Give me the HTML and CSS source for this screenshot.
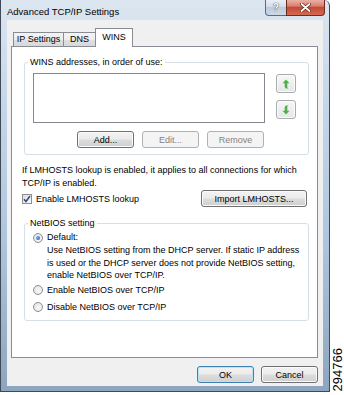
FILE: index.html
```html
<!DOCTYPE html>
<html>
<head>
<meta charset="utf-8">
<title>Advanced TCP/IP Settings</title>
<link rel="stylesheet" href="styles.css">
</head>
<body>
<div class="page">
  <div class="window">
    <div class="titlebar">
      <span class="title">Advanced TCP/IP Settings</span>
      <div class="caption-btns">
        <span class="cbtn help">?</span>
        <span class="cbtn close">
          <svg width="11" height="9" viewBox="0 0 11 9"><path d="M1.5 1 L9.5 8 M9.5 1 L1.5 8" stroke="#5a2018" stroke-width="3.2" stroke-linecap="round"/><path d="M1.5 1 L9.5 8 M9.5 1 L1.5 8" stroke="#fff" stroke-width="1.8" stroke-linecap="round"/></svg>
        </span>
      </div>
    </div>
    <div class="client">
      <div class="tabs">
        <span class="tab tab-ip">IP Settings</span>
        <span class="tab tab-dns">DNS</span>
        <span class="tab tab-wins active">WINS</span>
      </div>
      <div class="panel">
        <fieldset class="group wins">
          <legend>WINS addresses, in order of use:</legend>
          <div class="list-row">
            <div class="list-col">
              <div class="listbox"></div>
              <div class="btn-row">
                <button class="btn">Add...</button>
                <button class="btn" disabled>Edit...</button>
                <button class="btn" disabled>Remove</button>
              </div>
            </div>
            <div class="arrows">
              <button class="btn arrow" aria-label="Up">
                <svg width="8" height="10" viewBox="0 0 8 10"><path d="M4 0.5 L7.5 4.2 H5.3 V8 Q5.3 9.5 6.8 9.5 H4.6 Q2.7 9.5 2.7 7.5 V4.2 H0.5 Z" fill="#4db04a"/></svg>
              </button>
              <button class="btn arrow" aria-label="Down">
                <svg width="8" height="10" viewBox="0 0 8 10"><path d="M4 9.5 L7.5 5.8 H5.3 V2 Q5.3 0.5 6.8 0.5 H4.6 Q2.7 0.5 2.7 2.5 V5.8 H0.5 Z" fill="#4db04a"/></svg>
              </button>
            </div>
          </div>
        </fieldset>
        <p class="note">If LMHOSTS lookup is enabled, it applies to all connections for which TCP/IP is enabled.</p>
        <div class="lm-row">
          <label class="check">
            <span class="box">
              <svg width="8" height="8" viewBox="0 0 8 8"><path d="M1 4.2 L3 6.5 L7 1" fill="none" stroke="#2a4a8a" stroke-width="1.5"/></svg>
            </span>
            Enable LMHOSTS lookup
          </label>
          <button class="btn import">Import LMHOSTS...</button>
        </div>
        <fieldset class="group netbios">
          <legend>NetBIOS setting</legend>
          <div class="radio-item"><span class="radio on"></span>Default:</div>
          <p class="desc">Use NetBIOS setting from the DHCP server. If static IP address<br>is used or the DHCP server does not provide NetBIOS setting,<br>enable NetBIOS over TCP/IP.</p>
          <div class="radio-item"><span class="radio"></span>Enable NetBIOS over TCP/IP</div>
          <div class="radio-item"><span class="radio"></span>Disable NetBIOS over TCP/IP</div>
        </fieldset>
      </div>
      <div class="footer">
        <button class="btn default">OK</button>
        <button class="btn">Cancel</button>
      </div>
    </div>
  </div>
  <div class="side"><span class="fig">294766</span></div>
</div>
</body>
</html>
```

FILE: styles.css
```css
* { box-sizing: border-box; }
html, body { margin: 0; padding: 0; }
body {
  width: 344px;
  height: 395px;
  overflow: hidden;
  background: #fff;
  font-family: "Liberation Sans", Arial, sans-serif;
  font-size: 9px;
  color: #000;
}
.page { display: flex; height: 395px; }

.window {
  width: 330px;
  height: 392px;
  display: flex;
  flex-direction: column;
  padding: 0 6px 5px 6px;
  border: 1px solid #3f4a57;
  border-top: none;
  border-radius: 0 6px 0 0;
  background: linear-gradient(180deg, #dce6f0 0%, #c6d7e9 25%, #b0c6de 60%, #8ea5bf 100%);
}

.titlebar {
  height: 20px;
  flex: none;
  display: flex;
  justify-content: space-between;
  align-items: flex-start;
  margin-right: -2px;
}
.title {
  padding-top: 6px;
  font-size: 9.5px;
  line-height: 12px;
}
.caption-btns { display: flex; }
.cbtn {
  height: 16px;
  display: flex;
  align-items: center;
  justify-content: center;
  border: 1px solid #5c6b7d;
  border-top: none;
}
.help {
  width: 21px;
  border-right: none;
  border-radius: 0 0 0 4px;
  background: linear-gradient(180deg, #e9eff6 0%, #d3deea 45%, #bccbdc 50%, #ccd9e7 100%);
  color: #fff;
  font-weight: bold;
  font-size: 10px;
  text-shadow: 0 0 1px #3c4a5a, 0 0 1px #3c4a5a;
}
.close {
  width: 39px;
  border-color: #6b2c24;
  border-radius: 0 0 4px 0;
  background: linear-gradient(180deg, #eab1a4 0%, #d9806f 40%, #c44a35 50%, #d56a52 100%);
}

.client {
  flex: 1;
  display: flex;
  flex-direction: column;
  background: #f0f0f0;
  padding: 8px 5px 0 4px;
}

.tabs {
  display: flex;
  align-items: flex-end;
  height: 18px;
  padding-left: 2px;
}
.tab {
  height: 14px;
  border: 1px solid #898c95;
  border-bottom: none;
  background: linear-gradient(180deg, #f4f4f4 0%, #ececec 50%, #e0e0e0 51%, #d8d8d8 100%);
  text-align: center;
  line-height: 13px;
}
.tab-ip { width: 51px; }
.tab-dns { width: 33px; margin-left: -1px; }
.tab-wins { width: 38px; margin-left: -1px; }
.tab.active {
  height: 19px;
  margin-bottom: -1px;
  background: #fff;
  position: relative;
  z-index: 1;
  line-height: 17px;
}

.panel {
  height: 312px;
  flex: none;
  background: #fff;
  border: 1px solid #898c95;
  padding: 9px 8px 0 12px;
  display: flex;
  flex-direction: column;
}

.group {
  margin: 0;
  min-width: 0;
  border: 1px solid #d5dfe5;
  border-radius: 3px;
}
.group legend {
  padding: 0 2px;
  margin-left: -5px;
  line-height: 13px;
}
.wins { padding: 4px 12px 6px 8px; }

.list-row { display: flex; gap: 11px; }
.list-col { width: 232px; display: flex; flex-direction: column; }
.listbox {
  height: 50px;
  border: 1px solid #828790;
  background: #fff;
}
.btn-row {
  display: flex;
  justify-content: flex-end;
  gap: 8px;
  margin-top: 8px;
  padding-right: 1px;
}
.arrows {
  display: flex;
  flex-direction: column;
  gap: 7px;
  padding-top: 1px;
}

.btn {
  width: 57px;
  height: 17px;
  margin: 0;
  padding: 0;
  font-family: inherit;
  font-size: 9px;
  color: #000;
  border: 1px solid #707070;
  border-radius: 3px;
  background: linear-gradient(180deg, #f2f2f2 0%, #ebebeb 48%, #dddddd 52%, #cfcfcf 100%);
  box-shadow: inset 0 0 0 1px #fbfbfb;
  display: flex;
  align-items: center;
  justify-content: center;
}
.btn:disabled {
  border-color: #adb2b5;
  background: #f4f4f4;
  color: #838383;
  box-shadow: none;
}
.btn.arrow {
  width: 20px;
  height: 19px;
  border-color: #a7abb0;
  background: linear-gradient(180deg, #f7f7f7 0%, #efefef 50%, #e6e6e6 100%);
}
.btn.import { width: 106px; margin-right: 2px; }
.btn.default {
  border-color: #3c7fb1;
  box-shadow: inset 0 0 0 1px #b8e4f8;
}

.note {
  margin: 9px 0 0 -2px;
  line-height: 13px;
}

.lm-row {
  display: flex;
  align-items: center;
  justify-content: space-between;
  margin-left: -2px;
}
.check {
  display: flex;
  align-items: center;
  gap: 4px;
}
.box {
  width: 10px;
  height: 10px;
  border: 1px solid #8e8f8f;
  background: linear-gradient(135deg, #dcdcdc 0%, #fbfbfb 100%);
  display: flex;
  align-items: center;
  justify-content: center;
}

.netbios {
  margin-top: 10px;
  padding: 1px 12px 6px 8px;
}
.radio-item {
  display: flex;
  align-items: center;
  gap: 4px;
  line-height: 13px;
}
.radio-item + .radio-item { margin-top: 4px; }
.radio {
  width: 10px;
  height: 10px;
  border-radius: 50%;
  border: 1px solid #8e8f8f;
  background: radial-gradient(circle at 60% 60%, #fafafa 0%, #dcdcdc 100%);
  display: flex;
  align-items: center;
  justify-content: center;
}
.radio.on::after {
  content: "";
  width: 4px;
  height: 4px;
  border-radius: 50%;
  background: radial-gradient(circle at 35% 35%, #7fb2ee 0%, #1f4e96 100%);
}
.desc {
  margin: 0 0 2px 14px;
  line-height: 12.5px;
  white-space: nowrap;
}

.footer {
  display: flex;
  justify-content: flex-end;
  gap: 7px;
  margin-top: 8px;
}

.side {
  flex: 1;
  display: flex;
  flex-direction: column;
  justify-content: flex-end;
  align-items: center;
  padding-bottom: 4px;
}
.fig {
  writing-mode: vertical-rl;
  transform: rotate(180deg);
  font-family: "Liberation Sans", Arial, sans-serif;
  font-size: 13px;
  line-height: 1;
}
```
